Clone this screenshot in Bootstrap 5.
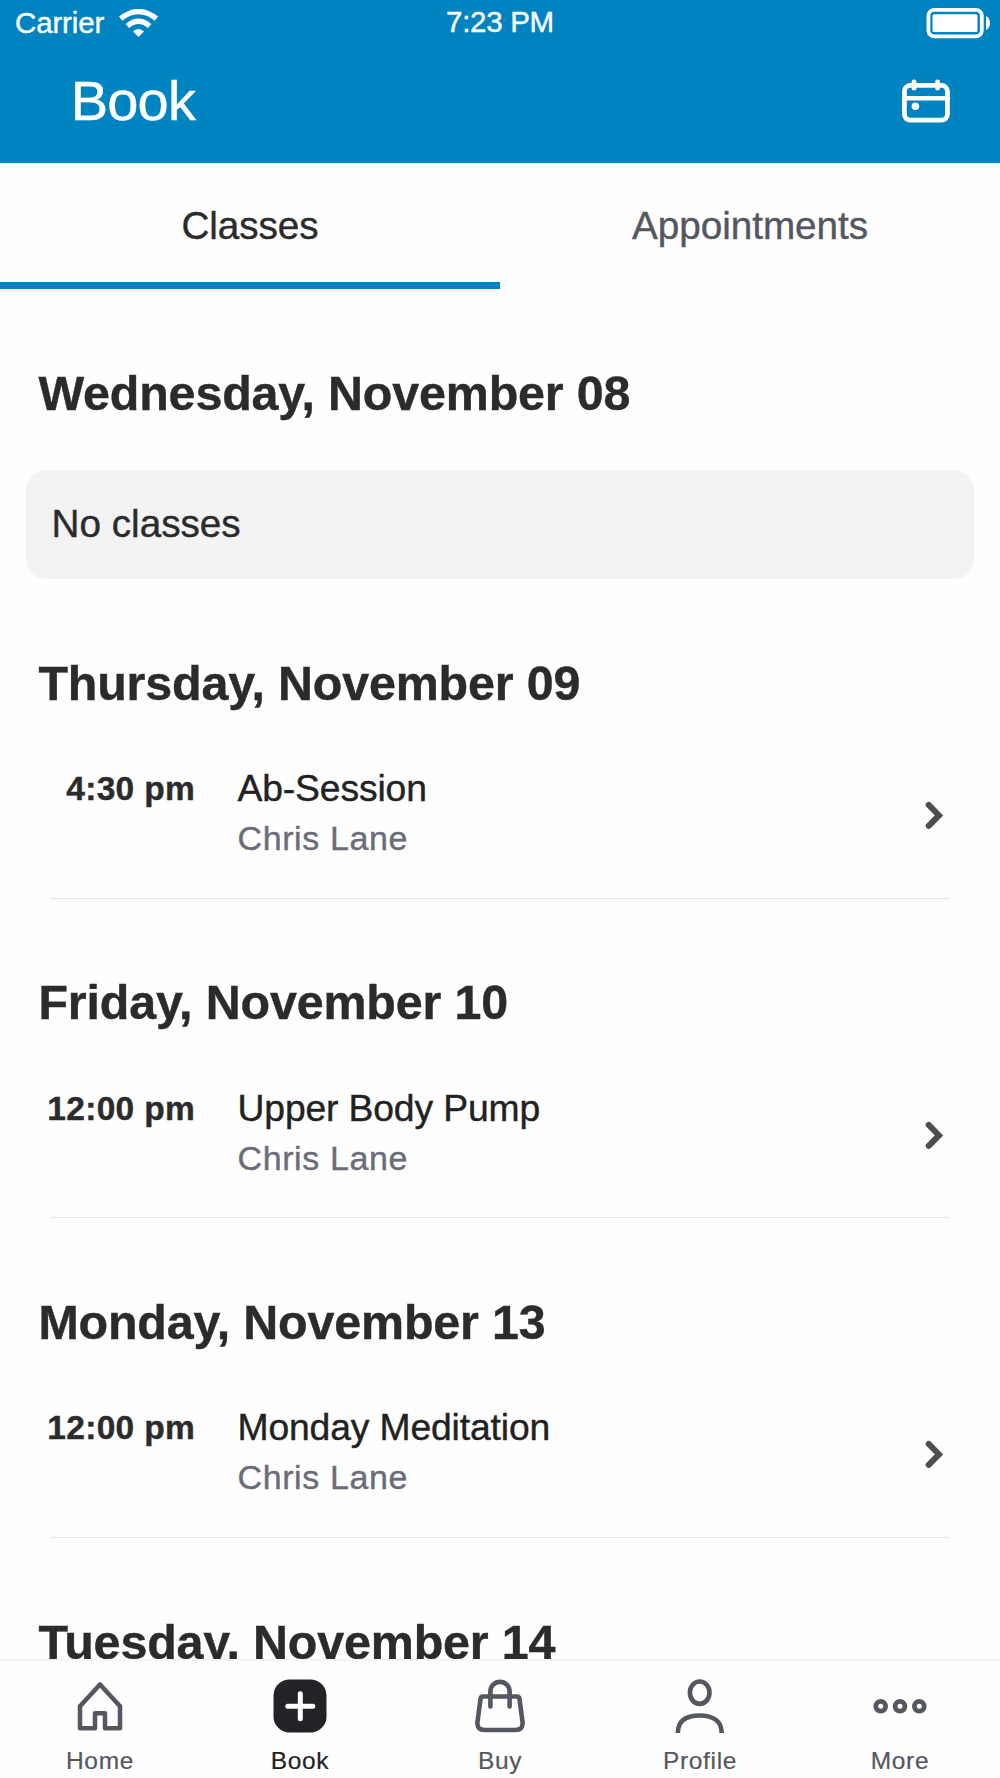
<!DOCTYPE html>
<html lang="en">
<head>
<meta charset="utf-8">
<meta name="viewport" content="width=device-width, initial-scale=1">
<title>Book</title>
<link rel="stylesheet" href="https://cdn.jsdelivr.net/npm/bootstrap@5.3.0/dist/css/bootstrap.min.css">
<style>
:root { --brand: #0083c1; --ink: #2b2b2b; --slate: #545760; }
body { font-family: "Liberation Sans", Arial, sans-serif; color: var(--ink); background: #fefefe; -webkit-text-stroke: .4px currentColor; }
.screen { width: 1000px; height: 1778px; }
.topbar { background: var(--brand); height: 163.4px; margin-bottom: -.4px; flex: none; }
.statusbar { height: 46px; font-size: 30px; line-height: 46px; padding: 0 9px 0 15px; }
.carrier { font-size: 29.5px; letter-spacing: -.15px; }
.wifi { margin-left: 14.5px; }
.clock { font-size: 29.5px; line-height: 43px; letter-spacing: -.3px; padding-right: 6px; }
.titlebar { padding: 0 50px 0 70.7px; height: 109px; }
.page-title { font-size: 56px; line-height: 109px; letter-spacing: -.8px; }
.tabs { height: 126px; flex: none; }
.tab { font-size: 38.7px; line-height: 126px; height: 126px; color: var(--slate); letter-spacing: -.05px; }
.tab.active { color: var(--ink); box-shadow: inset 0 -7px 0 var(--brand); }
.feed { min-height: 0; flex: 1 1 auto; }
.day { padding-top: 74px; }
.day.after-row { padding-top: 73.5px; }
.day-title { font-size: 48.4px; line-height: 60px; padding-left: 38.4px; letter-spacing: -.15px; }
.empty-card { margin: 46.5px 26px 0; height: 109.3px; border-radius: 20px; background: #f3f3f3; padding-left: 25.5px; font-size: 38.7px; }
.class-row { margin: 0 50px 0 38px; height: 186.1px; padding-top: 50.5px; line-height: 50px; }
.row-line { margin: -1px 50px 0; height: 1px; background: #e4e4e5; }
.time { width: 157px; font-size: 33.5px; letter-spacing: .3px; line-height: 51px; margin-right: 42.5px; white-space: nowrap; }
.class-name { font-size: 37.3px; letter-spacing: -.15px; color: #222; }
.teacher { font-size: 34px; letter-spacing: .6px; color: #6a6c77; }
.chevron { margin: 37px 5px 0 0; }
.bottom-nav { height: 119px; flex: none; background: #fefefe; border-top: 2px solid #f5f5f5; padding-top: 18px; }
.nav-cell { color: var(--slate); font-size: 24.5px; letter-spacing: .65px; line-height: 30px; -webkit-text-stroke-width: .2px; }
.nav-cell svg { margin-bottom: 13px; }
.nav-cell.active { color: #222; }
</style>
<script src="https://cdn.jsdelivr.net/npm/bootstrap@5.3.0/dist/js/bootstrap.bundle.min.js"></script>
</head>
<body>
<div class="screen d-flex flex-column overflow-hidden">
  <header class="topbar text-white">
    <div class="statusbar row g-0">
      <div class="col-4 d-flex align-items-center">
        <span class="carrier">Carrier</span>
        <svg class="wifi" width="39" height="28" viewBox="0 0 39 28" fill="none" stroke="#fff" stroke-width="5.2"><path d="M1.6 9.6Q19.5-4.6 37.4 9.6"/><path d="M8.4 17Q19.5 7.6 30.6 17"/><path d="M19.5 28 14 22.6Q19.5 17.6 25 22.6Z" fill="#fff" stroke="none"/></svg>
      </div>
      <div class="col-4 text-center clock">7:23 PM</div>
      <div class="col-4 d-flex justify-content-end align-items-center">
        <svg width="65" height="32" viewBox="0 0 65 32"><rect x="2.4" y="2.8" width="53.4" height="26.6" rx="6" fill="none" stroke="#fff" stroke-width="3.8"/><rect x="6.5" y="7.3" width="45" height="17.7" rx="1.5" fill="#fff"/><path d="M60 9.2c5.3 1.8 5.3 12 0 13.8Z" fill="#fff"/></svg>
      </div>
    </div>
    <div class="titlebar d-flex justify-content-between align-items-center">
      <h1 class="page-title fw-normal mb-0">Book</h1>
      <svg width="48" height="44" viewBox="0 0 48 44" fill="none" stroke="#fff" stroke-width="4.8" stroke-linecap="round"><rect x="2.4" y="6.4" width="43" height="34.8" rx="6"/><path d="M2.4 19.2h43" stroke-width="4.4"/><path d="M12 2.8v6.4M35.6 2.8v6.4"/><circle cx="13.4" cy="27.3" r="3.8" fill="#fff" stroke="none"/></svg>
    </div>
  </header>
  <nav class="tabs row g-0 text-center">
    <div class="col-6 tab active">Classes</div>
    <div class="col-6 tab">Appointments</div>
  </nav>
  <main class="feed overflow-hidden">
    <section class="day">
      <h2 class="day-title fw-bold mb-0">Wednesday, November 08</h2>
      <div class="empty-card d-flex align-items-center">No classes</div>
    </section>
    <section class="day">
      <h2 class="day-title fw-bold mb-0">Thursday, November 09</h2>
      <div class="class-row d-flex align-items-start">
        <div class="time fw-bold text-end">4:30 pm</div>
        <div class="flex-grow-1"><div class="class-name">Ab-Session</div><div class="teacher">Chris Lane</div></div>
        <svg class="chevron" width="20" height="31" viewBox="0 0 20 31" fill="none" stroke="#4d4e52" stroke-width="6" stroke-linecap="round"><path d="M3.7 4.9 14 15.4 3.7 25.9"/></svg>
      </div>
      <div class="row-line"></div>
    </section>
    <section class="day after-row">
      <h2 class="day-title fw-bold mb-0">Friday, November 10</h2>
      <div class="class-row d-flex align-items-start">
        <div class="time fw-bold text-end">12:00 pm</div>
        <div class="flex-grow-1"><div class="class-name">Upper Body Pump</div><div class="teacher">Chris Lane</div></div>
        <svg class="chevron" width="20" height="31" viewBox="0 0 20 31" fill="none" stroke="#4d4e52" stroke-width="6" stroke-linecap="round"><path d="M3.7 4.9 14 15.4 3.7 25.9"/></svg>
      </div>
      <div class="row-line"></div>
    </section>
    <section class="day after-row">
      <h2 class="day-title fw-bold mb-0">Monday, November 13</h2>
      <div class="class-row d-flex align-items-start">
        <div class="time fw-bold text-end">12:00 pm</div>
        <div class="flex-grow-1"><div class="class-name">Monday Meditation</div><div class="teacher">Chris Lane</div></div>
        <svg class="chevron" width="20" height="31" viewBox="0 0 20 31" fill="none" stroke="#4d4e52" stroke-width="6" stroke-linecap="round"><path d="M3.7 4.9 14 15.4 3.7 25.9"/></svg>
      </div>
      <div class="row-line"></div>
    </section>
    <section class="day after-row">
      <h2 class="day-title fw-bold mb-0">Tuesday, November 14</h2>
    </section>
  </main>
  <nav class="bottom-nav row g-0 row-cols-5">
    <div class="col nav-cell d-flex flex-column align-items-center">
      <svg width="54" height="54" viewBox="0 0 54 54" fill="none" stroke="currentColor" stroke-width="4.5" stroke-linejoin="round"><path d="M27 5.5 7 27.2V49.2H22V34.2H32V49.2H47V27.2Z"/></svg>
      <span>Home</span>
    </div>
    <div class="col nav-cell active d-flex flex-column align-items-center">
      <svg width="54" height="54" viewBox="0 0 54 54"><rect x=".5" y=".5" width="53" height="53" rx="16" fill="#222327"/><path d="M27.3 14.7V39.7M14.8 27.2H39.8" stroke="#fff" stroke-width="5" stroke-linecap="round"/></svg>
      <span>Book</span>
    </div>
    <div class="col nav-cell d-flex flex-column align-items-center">
      <svg width="54" height="54" viewBox="0 0 54 54" fill="none" stroke="currentColor" stroke-width="4.6" stroke-linecap="round" stroke-linejoin="round"><path d="M10 17.5H44Q46.200 17.5 46.500 20L49.600 43.500Q50 51 42.500 51H11.500Q4 51 4.400 43.500L7.500 20Q7.800 17.5 10 17.5Z"/><path d="M17.4 27.5V12.5a9.600 9.600 0 0 1 19.2 0V27.5"/></svg>
      <span>Buy</span>
    </div>
    <div class="col nav-cell d-flex flex-column align-items-center">
      <svg width="54" height="54" viewBox="0 0 54 54" fill="none" stroke="currentColor" stroke-width="4.6"><ellipse cx="26.7" cy="13.7" rx="9.8" ry="11.2"/><path d="M4.8 54C4.8 42 13 36.5 26.7 36.5S48.7 42 48.7 54"/></svg>
      <span>Profile</span>
    </div>
    <div class="col nav-cell d-flex flex-column align-items-center">
      <svg width="54" height="54" viewBox="0 0 54 54" fill="none" stroke="currentColor" stroke-width="4.8"><circle cx="7.7" cy="27.3" r="4.9"/><circle cx="27" cy="27.3" r="4.9"/><circle cx="46.3" cy="27.3" r="4.9"/></svg>
      <span>More</span>
    </div>
  </nav>
</div>
</body>
</html>
